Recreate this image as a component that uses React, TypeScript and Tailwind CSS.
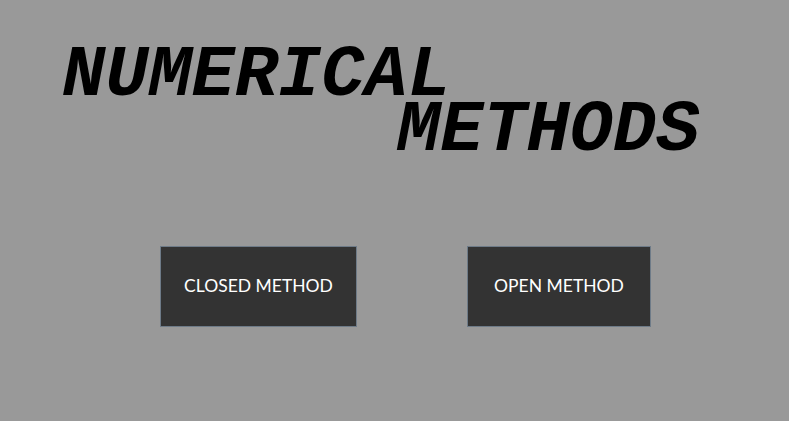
import React from 'react';

export default function App() {
  return (
    <div className="w-[789px] h-[421px] bg-[#999999] overflow-hidden">
      <div className="pt-[49px] font-['Courier_New','Liberation_Mono',monospace] font-bold italic text-[72px] leading-[55px] text-black">
        <div className="pl-[62px]">NUMERICAL</div>
        <div className="pl-[397px]">METHODS</div>
      </div>
      <div className="flex gap-[110px] pl-[160px] mt-[87px] font-['Lato',sans-serif] text-[17.5px] text-white">
        <button className="w-[197px] h-[81px] bg-[#333333] border border-[#6e7b88] flex items-center justify-center">
          CLOSED METHOD
        </button>
        <button className="w-[184px] h-[81px] bg-[#333333] border border-[#6e7b88] flex items-center justify-center">
          OPEN METHOD
        </button>
      </div>
    </div>
  );
}
